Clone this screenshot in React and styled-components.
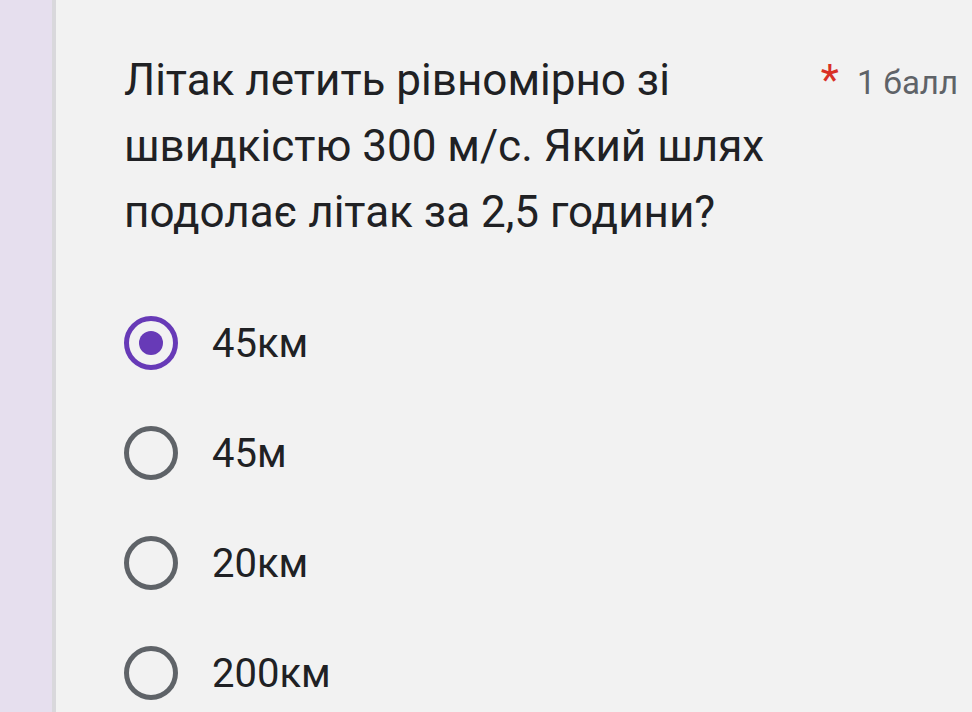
import styled, { createGlobalStyle } from "styled-components";

const GlobalStyle = createGlobalStyle`
  html, body {
    margin: 0;
    padding: 0;
    background: #f2f2f2;
  }
  body {
    font-family: Roboto, "Noto Sans", Arial, sans-serif;
    color: #202124;
  }
`;

const Page = styled.div`
  display: flex;
  width: 972px;
  height: 712px;
  overflow: hidden;
`;

const Stripe = styled.div`
  width: 52px;
  flex-shrink: 0;
  background: #e6dfee;
`;

const Card = styled.div`
  flex: 1;
  background: #f2f2f2;
  border-left: 4px solid #d9d8dc;
  padding: 47px 14px 0 68px;
`;

const Header = styled.div`
  display: flex;
  align-items: flex-start;
  gap: 30px;
`;

const Title = styled.div`
  flex: 1;
  font-size: 44px;
  line-height: 66px;
  color: #202124;
`;

const Points = styled.div`
  display: flex;
  align-items: baseline;
  gap: 18px;
  font-size: 33px;
  line-height: 66px;
  color: #5f6368;
  white-space: nowrap;
`;

const Required = styled.span`
  color: #d93025;
  font-size: 42px;
`;

const Options = styled.div`
  display: flex;
  flex-direction: column;
  margin-top: 43px;
`;

const Option = styled.label`
  display: flex;
  align-items: center;
  gap: 34px;
  height: 110px;
  font-size: 40px;
  color: #202124;
`;

const Radio = styled.span`
  box-sizing: border-box;
  width: 54px;
  height: 54px;
  border-radius: 50%;
  border: 5px solid ${(props) => (props.checked ? "#673ab7" : "#5f6368")};
  display: flex;
  align-items: center;
  justify-content: center;
  flex-shrink: 0;

  &::after {
    content: "";
    display: ${(props) => (props.checked ? "block" : "none")};
    width: 24px;
    height: 24px;
    border-radius: 50%;
    background: #673ab7;
  }
`;

const options = [
  { label: "45км", checked: true },
  { label: "45м" },
  { label: "20км" },
  { label: "200км" },
];

const App = () => {
  return (
    <>
      <GlobalStyle />
      <Page>
        <Stripe />
        <Card>
          <Header>
            <Title>
              Літак летить рівномірно зі швидкістю 300 м/с. Який шлях
              подолає літак за 2,5 години?
            </Title>
            <Points>
              <Required>*</Required>
              <span>1 балл</span>
            </Points>
          </Header>
          <Options>
            {options.map((o) => (
              <Option key={o.label}>
                <Radio checked={o.checked} />
                <span>{o.label}</span>
              </Option>
            ))}
          </Options>
        </Card>
      </Page>
    </>
  );
};

export default App;
